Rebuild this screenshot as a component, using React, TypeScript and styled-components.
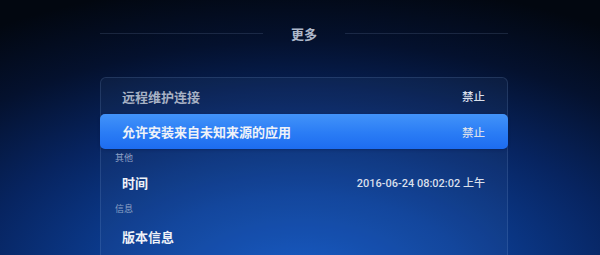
import styled, { createGlobalStyle } from "styled-components";

const GlobalStyle = createGlobalStyle`
  html, body {
    margin: 0;
    padding: 0;
    background: #020812;
  }
`;

const Screen = styled.div`
  width: 600px;
  height: 255px;
  overflow: hidden;
  font-family: "Noto Sans CJK SC", "Noto Sans", Roboto, sans-serif;
  background: radial-gradient(
    ellipse 95% 120% at 50% 112%,
    #1358c6 0%,
    #0c4098 30%,
    #072460 58%,
    #04112e 80%,
    #020710 100%
  );
`;

const Content = styled.div`
  width: 408px;
  margin: 0 auto 0 100px;
  padding-top: 23px;
`;

const TitleRow = styled.div`
  display: flex;
  align-items: center;
  gap: 28px;
  height: 20px;
  margin-bottom: 34px;
`;

const TitleLine = styled.div`
  flex: 1;
  height: 1px;
  background: rgba(150, 175, 215, 0.16);
`;

const Title = styled.div`
  font-size: 13px;
  font-weight: 700;
  color: #aeb8cb;
`;

const Panel = styled.div`
  height: 220px;
  border: 1px solid rgba(150, 180, 230, 0.16);
  border-radius: 6px;
  background: rgba(120, 150, 210, 0.07);
  box-sizing: border-box;
`;

const Row = styled.div<{ $active?: boolean; $h?: number; $muted?: boolean }>`
  display: flex;
  align-items: center;
  justify-content: space-between;
  height: ${(p) => p.$h ?? 30}px;
  padding: 0 23px 0 22px;
  margin: 0 -1px;
  border-radius: 5px;
  background: ${(p) =>
    p.$active ? "linear-gradient(to bottom, #4293f9 0%, #2a7cf5 55%, #1d6cf0 100%)" : "transparent"};
  box-shadow: ${(p) => (p.$active ? "0 1px 3px rgba(0, 20, 70, 0.35)" : "none")};
  color: ${(p) => (p.$muted ? "#a7b1c4" : "#eef2f8")};
`;

const Label = styled.div`
  font-size: 13px;
  font-weight: 700;
`;

const Value = styled.div<{ $small?: boolean }>`
  font-size: ${(p) => (p.$small ? "11px" : "11.5px")};
  font-family: Roboto, "Noto Sans CJK SC", sans-serif;
  font-weight: 500;
  color: #d8dfeb;
`;

const Section = styled.div<{ $top: number; $h: number }>`
  height: ${(p) => p.$h}px;
  padding: ${(p) => p.$top}px 0 0 14px;
  box-sizing: border-box;
  font-size: 9px;
  line-height: 12px;
  color: #8fa2c6;
`;

const App = () => {
  return (
    <Screen>
      <GlobalStyle />
      <Content>
        <TitleRow>
          <TitleLine />
          <Title>更多</Title>
          <TitleLine />
        </TitleRow>
        <Panel>
          <Row $h={36} $muted>
            <Label>远程维护连接</Label>
            <Value>禁止</Value>
          </Row>
          <Row $h={35} $active>
            <Label>允许安装来自未知来源的应用</Label>
            <Value>禁止</Value>
          </Row>
          <Section $top={3} $h={18}>其他</Section>
          <Row>
            <Label>时间</Label>
            <Value $small>2016-06-24 08:02:02 上午</Value>
          </Row>
          <Section $top={6} $h={24}>信息</Section>
          <Row>
            <Label>版本信息</Label>
          </Row>
        </Panel>
      </Content>
    </Screen>
  );
};

export default App;
